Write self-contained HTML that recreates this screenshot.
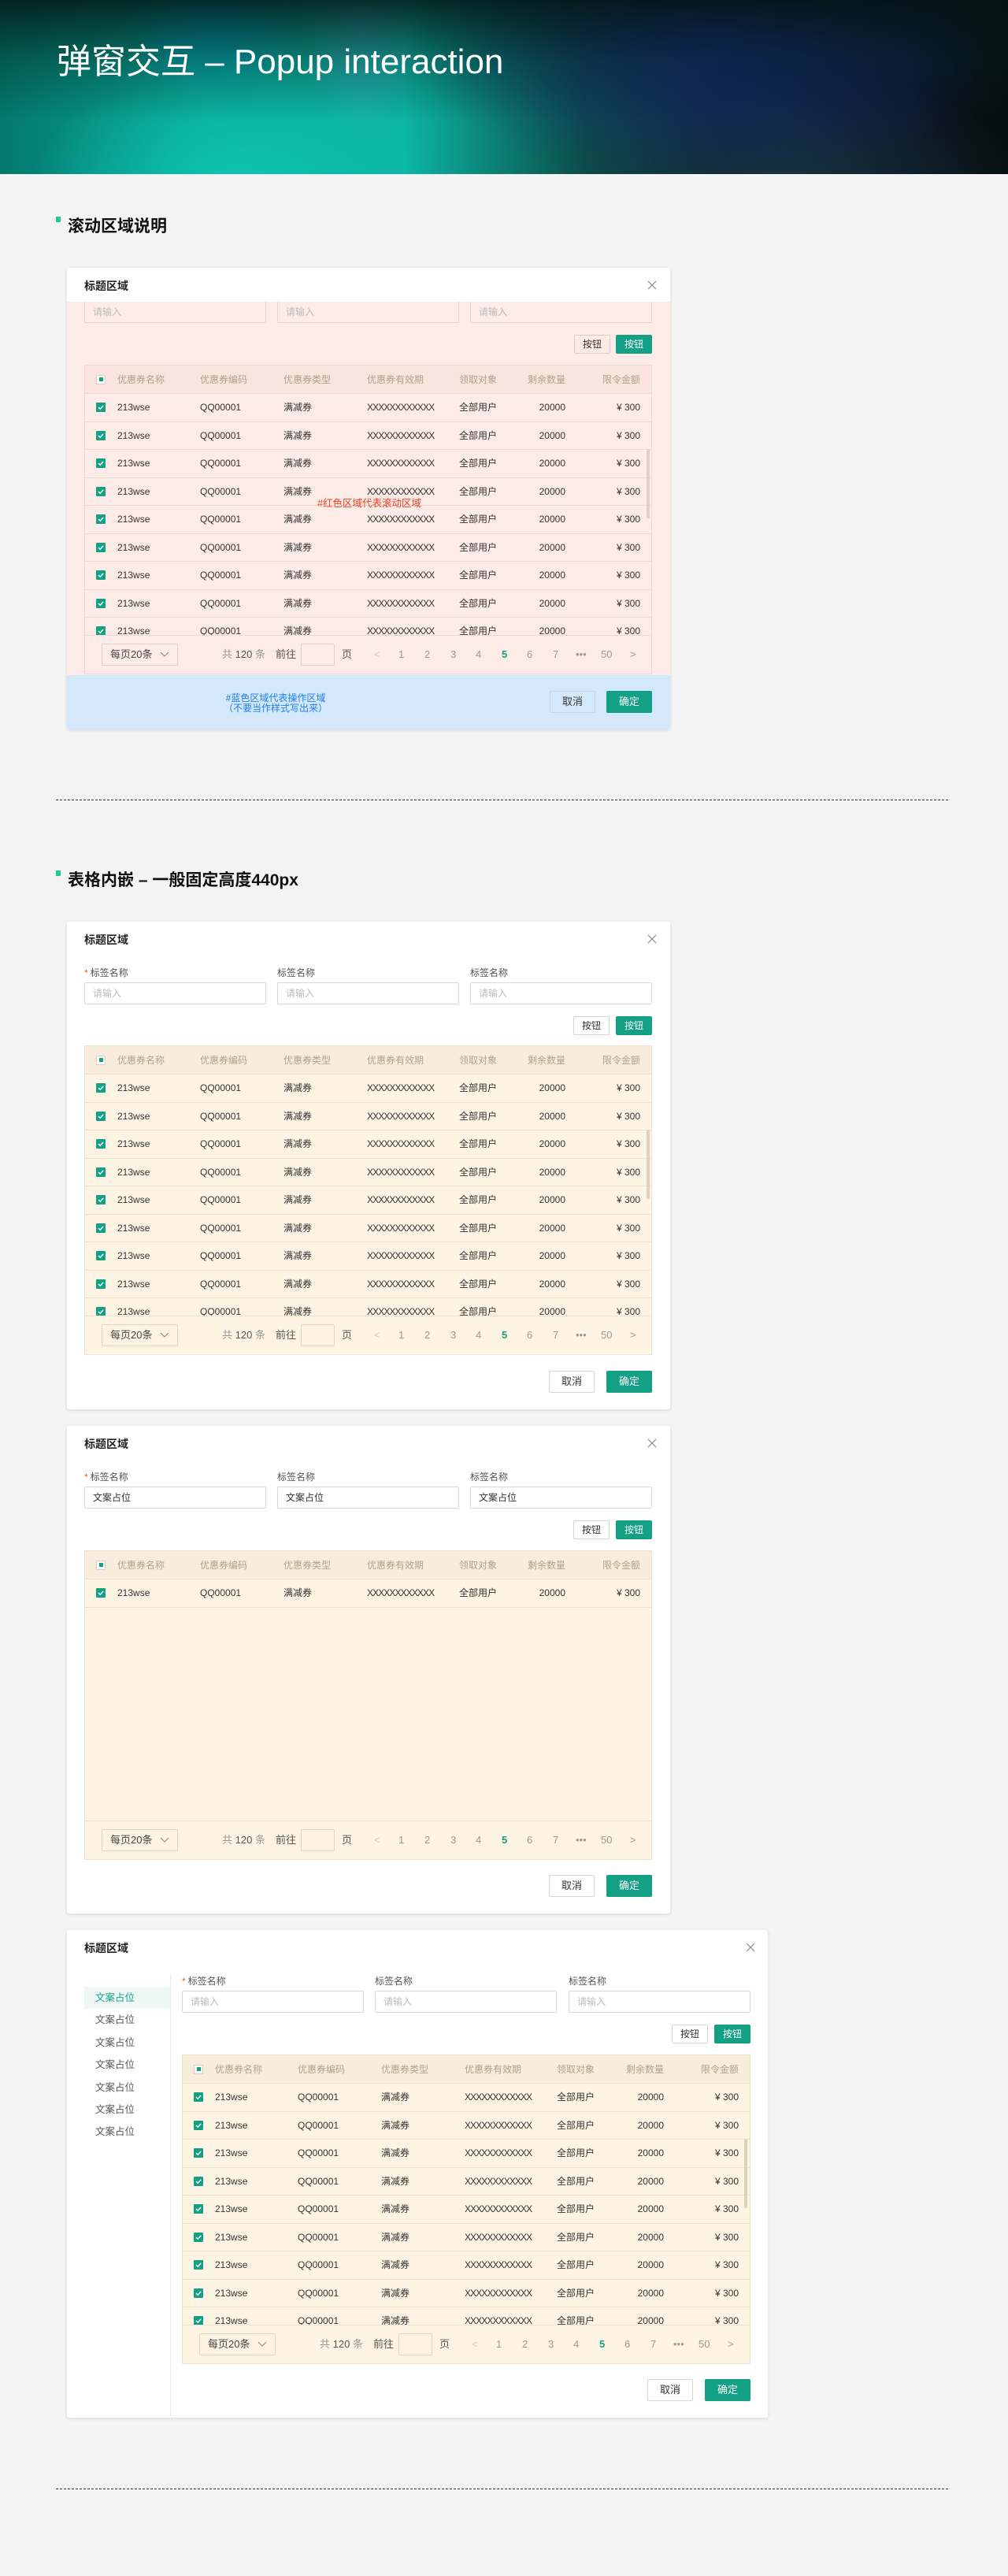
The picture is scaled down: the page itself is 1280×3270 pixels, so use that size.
<!DOCTYPE html>
<html><head><meta charset="utf-8">
<style>
*{margin:0;padding:0;box-sizing:border-box}
body{width:1280px;height:3270px;background:#f4f4f4;font-family:"Liberation Sans","Noto Sans CJK SC",sans-serif;position:relative;overflow:hidden;color:#333}
.banner{position:absolute;left:0;top:0;width:1280px;height:221px;overflow:hidden;
background:
radial-gradient(ellipse 260px 160px at 300px 240px,rgba(12,200,180,.9),rgba(12,200,180,0) 100%),
radial-gradient(ellipse 120px 110px at 270px 20px,rgba(0,170,210,.8),rgba(0,170,210,0)),
radial-gradient(ellipse 80px 150px at 460px 30px,rgba(60,180,200,.7),rgba(60,180,200,0)),
radial-gradient(ellipse 380px 200px at 900px 40px,rgba(20,45,120,.95),rgba(20,45,120,0)),
radial-gradient(ellipse 300px 140px at 1000px 230px,rgba(30,70,70,.6),rgba(30,70,70,0)),
linear-gradient(90deg,#03796e 0%,#0aa99a 20%,#0cb5a5 40%,#0b4e48 58%,#0a1a2a 72%,#0a1225 90%,#050f0c 100%);}
.banner .shade{position:absolute;left:0;top:0;width:100%;height:100%;background:linear-gradient(180deg,rgba(3,20,18,.85) 0%,rgba(3,30,28,.35) 35%,rgba(0,0,0,0) 70%)}
.banner h1{position:absolute;left:72px;top:53px;font-size:44px;font-weight:normal;color:#fff;white-space:nowrap;line-height:52px}
.sec{position:absolute;left:86px;font-size:21px;font-weight:bold;color:#111;line-height:26px}
.sec:before{content:"";position:absolute;left:-15px;top:0px;width:6px;height:7px;background:#1ccf8f}
.dash{position:absolute;left:71px;width:1133px;height:0;border-top:1px dashed #333}
.dlg{position:absolute;background:#fff;border-radius:3px;box-shadow:0 1px 5px rgba(0,0,0,.12);overflow:hidden}
.ttl{position:absolute;left:22px;top:14px;font-size:14px;font-weight:bold;color:#222;line-height:18px}
.x{position:absolute;width:14px;height:14px}
.lbl{position:absolute;font-size:12px;color:#555;line-height:14px}
.lbl b{color:#f25a2a;font-weight:normal;margin-right:3px}
.inp{position:absolute;width:231px;height:28px;border:1px solid #d9d9d9;border-radius:2px;background:#fff;font-size:12px;color:#bbb;line-height:26px;padding-left:10px}
.inp.f{color:#333}
.btn{position:absolute;height:24px;width:46px;font-size:12px;line-height:22px;text-align:center;border:1px solid #d6d6d6;border-radius:2px;background:#fff;color:#333}
.btn.p{background:#14a085;border-color:#14a085;color:#fff}
.btn.l{width:58px;height:28px;line-height:26px;font-size:13px}
.tbl{position:absolute;width:721px;background:#fdf4e4;border:1px solid #f0e4cc;font-size:12px}
.th{position:relative;height:36px;background:#f8eddc;border-bottom:1px solid #efe2cb;color:#b0a28a}
.rows{position:relative;height:306px;overflow:hidden}
.r{position:relative;height:35.5px;border-bottom:1px solid #efe2cb}
.r span,.th span{position:absolute;top:50%;transform:translateY(-50%);white-space:nowrap;line-height:14px}
.c1{left:41px}.c2{left:146px}.c3{left:252px}.c4{left:358px}.c5{left:475px}.c6{right:109px}.c7{right:14px}
.r .c4{letter-spacing:-0.9px}
.cb{position:absolute;left:14px;top:50%;margin-top:-6px;width:12px;height:12px;background:#14a085;border-radius:1px}
.cb svg{position:absolute;left:1px;top:1px}
.cbh{position:absolute;left:14px;top:50%;margin-top:-6px;width:12px;height:12px;background:#fff;border:1px solid #d6cfc2;border-radius:1px}
.cbh:after{content:"";position:absolute;left:2.5px;top:2.5px;width:5px;height:5px;background:#14a085}
.sb{position:absolute;left:713px;top:70px;width:4px;height:88px;border-radius:2px;background:#dcd2bf}
.pg{position:relative;height:49px;border-top:1px solid #efe2cb;font-size:13px;color:#555}
.pg span{position:absolute;top:50%;transform:translateY(-50%);line-height:16px;white-space:nowrap}
.sel{position:absolute;left:21px;top:10px;width:97px;height:28px;border:1px solid #e0d6c3;border-radius:2px;line-height:26px;padding-left:10px;font-size:13px;color:#444}
.sel svg{position:absolute;right:10px;top:9px}
.gi{position:absolute;left:274px;top:10px;width:43px;height:28px;border:1px solid #e0d6c3;border-radius:2px;background:#fdf4e4}
.g{color:#999}
.pn{color:#999}
.pn.a{color:#14a085;font-weight:bold}
.side{position:absolute;left:22px;top:57px;width:110px;height:560px;border-right:1px solid #e8e8e8}
.mi{height:28.4px;line-height:28.4px;padding-left:14px;font-size:12.5px;color:#555}
.mi.a{background:#eef9f6;color:#14a085}
</style></head><body>

<div class="banner"><div class="shade"></div><h1>弹窗交互 – Popup interaction</h1></div>

<div class="sec" style="top:275px">滚动区域说明</div>

<!-- Dialog 1 -->
<div class="dlg" style="left:85px;top:340px;width:766px;height:586px">
  <div style="position:absolute;left:0;top:43px;width:766px;height:474px;background:#fdebe7"></div>
  <div style="position:absolute;left:0;top:517px;width:766px;height:69px;background:#d4e8fb"></div>
  <div class="inp" style="left:22px;top:42px;background:#fdebe7;border-color:#e6d2ce">请输入</div>
  <div class="inp" style="left:267px;top:42px;background:#fdebe7;border-color:#e6d2ce">请输入</div>
  <div class="inp" style="left:512px;top:42px;background:#fdebe7;border-color:#e6d2ce">请输入</div>
  <div style="position:absolute;left:0;top:0;width:766px;height:43px;background:#fff"></div>
  <div class="ttl">标题区域</div>
  <svg class="x" style="left:736px;top:15px" viewBox="0 0 14 14"><path d="M2 2L12 12M12 2L2 12" stroke="#888" stroke-width="1.2"/></svg>
  <div class="btn" style="left:644px;top:85px;background:#fdebe7;border-color:#e0cbc7">按钮</div>
  <div class="btn p" style="left:697px;top:85px">按钮</div>
  <div class="tbl" style="left:22px;top:123px;background:#fdebe7;border-color:#f0d8d3">
    <div class="th" style="background:#fbe3de;border-color:#f0d8d3"><div class="cbh"></div><span class="c1">优惠券名称</span><span class="c2">优惠券编码</span><span class="c3">优惠券类型</span><span class="c4">优惠券有效期</span><span class="c5">领取对象</span><span class="c6">剩余数量</span><span class="c7">限令金额</span></div>
    <div class="rows">
      <div class="r" style="border-color:#f0d8d3"><div class="cb"><svg width="10" height="10" viewBox="0 0 10 10"><path d="M2 5L4.2 7.2L8.2 2.8" fill="none" stroke="#fff" stroke-width="1.4"/></svg></div><span class="c1">213wse</span><span class="c2">QQ00001</span><span class="c3">满减券</span><span class="c4">XXXXXXXXXXXX</span><span class="c5">全部用户</span><span class="c6">20000</span><span class="c7">¥ 300</span></div>
      <div class="r" style="border-color:#f0d8d3"><div class="cb"><svg width="10" height="10" viewBox="0 0 10 10"><path d="M2 5L4.2 7.2L8.2 2.8" fill="none" stroke="#fff" stroke-width="1.4"/></svg></div><span class="c1">213wse</span><span class="c2">QQ00001</span><span class="c3">满减券</span><span class="c4">XXXXXXXXXXXX</span><span class="c5">全部用户</span><span class="c6">20000</span><span class="c7">¥ 300</span></div>
      <div class="r" style="border-color:#f0d8d3"><div class="cb"><svg width="10" height="10" viewBox="0 0 10 10"><path d="M2 5L4.2 7.2L8.2 2.8" fill="none" stroke="#fff" stroke-width="1.4"/></svg></div><span class="c1">213wse</span><span class="c2">QQ00001</span><span class="c3">满减券</span><span class="c4">XXXXXXXXXXXX</span><span class="c5">全部用户</span><span class="c6">20000</span><span class="c7">¥ 300</span></div>
      <div class="r" style="border-color:#f0d8d3"><div class="cb"><svg width="10" height="10" viewBox="0 0 10 10"><path d="M2 5L4.2 7.2L8.2 2.8" fill="none" stroke="#fff" stroke-width="1.4"/></svg></div><span class="c1">213wse</span><span class="c2">QQ00001</span><span class="c3">满减券</span><span class="c4">XXXXXXXXXXXX</span><span class="c5">全部用户</span><span class="c6">20000</span><span class="c7">¥ 300</span></div>
      <div class="r" style="border-color:#f0d8d3"><div class="cb"><svg width="10" height="10" viewBox="0 0 10 10"><path d="M2 5L4.2 7.2L8.2 2.8" fill="none" stroke="#fff" stroke-width="1.4"/></svg></div><span class="c1">213wse</span><span class="c2">QQ00001</span><span class="c3">满减券</span><span class="c4">XXXXXXXXXXXX</span><span class="c5">全部用户</span><span class="c6">20000</span><span class="c7">¥ 300</span></div>
      <div class="r" style="border-color:#f0d8d3"><div class="cb"><svg width="10" height="10" viewBox="0 0 10 10"><path d="M2 5L4.2 7.2L8.2 2.8" fill="none" stroke="#fff" stroke-width="1.4"/></svg></div><span class="c1">213wse</span><span class="c2">QQ00001</span><span class="c3">满减券</span><span class="c4">XXXXXXXXXXXX</span><span class="c5">全部用户</span><span class="c6">20000</span><span class="c7">¥ 300</span></div>
      <div class="r" style="border-color:#f0d8d3"><div class="cb"><svg width="10" height="10" viewBox="0 0 10 10"><path d="M2 5L4.2 7.2L8.2 2.8" fill="none" stroke="#fff" stroke-width="1.4"/></svg></div><span class="c1">213wse</span><span class="c2">QQ00001</span><span class="c3">满减券</span><span class="c4">XXXXXXXXXXXX</span><span class="c5">全部用户</span><span class="c6">20000</span><span class="c7">¥ 300</span></div>
      <div class="r" style="border-color:#f0d8d3"><div class="cb"><svg width="10" height="10" viewBox="0 0 10 10"><path d="M2 5L4.2 7.2L8.2 2.8" fill="none" stroke="#fff" stroke-width="1.4"/></svg></div><span class="c1">213wse</span><span class="c2">QQ00001</span><span class="c3">满减券</span><span class="c4">XXXXXXXXXXXX</span><span class="c5">全部用户</span><span class="c6">20000</span><span class="c7">¥ 300</span></div>
      <div class="r" style="border-color:#f0d8d3"><div class="cb"><svg width="10" height="10" viewBox="0 0 10 10"><path d="M2 5L4.2 7.2L8.2 2.8" fill="none" stroke="#fff" stroke-width="1.4"/></svg></div><span class="c1">213wse</span><span class="c2">QQ00001</span><span class="c3">满减券</span><span class="c4">XXXXXXXXXXXX</span><span class="c5">全部用户</span><span class="c6">20000</span><span class="c7">¥ 300</span></div>
      <div class="sb" style="background:#e2cfcb"></div>
      <div style="position:absolute;left:295px;top:132px;font-size:12.5px;color:#f0401f;line-height:14px;white-space:nowrap">#红色区域代表滚动区域</div>
    </div>
    <div class="pg" style="border-color:#f0d8d3">
      <div class="sel" style="border-color:#e3cfca">每页20条<svg width="12" height="8" viewBox="0 0 12 8"><path d="M1 1L6 6L11 1" fill="none" stroke="#888" stroke-width="1.1"/></svg></div>
      <span style="left:174px"><i class="g" style="font-style:normal">共</i> 120 <i class="g" style="font-style:normal">条</i></span>
      <span style="left:242px">前往</span>
      <div class="gi" style="background:#fdebe7;border-color:#e3cfca"></div>
      <span style="left:326px">页</span>
      <span class="pn" style="left:367px;color:#ccc">&lt;</span><span class="pn" style="left:398px">1</span><span class="pn" style="left:431px">2</span><span class="pn" style="left:464px">3</span><span class="pn" style="left:496px">4</span><span class="pn a" style="left:529px">5</span><span class="pn" style="left:561px">6</span><span class="pn" style="left:594px">7</span><span class="pn" style="left:623px">•••</span><span class="pn" style="left:655px">50</span><span class="pn" style="left:692px">&gt;</span>
    </div>
  </div>
  <div style="position:absolute;left:180px;top:540px;width:170px;text-align:center;font-size:12px;line-height:13px;color:#1f80e8">#蓝色区域代表操作区域<br>（不要当作样式写出来）</div>
  <div class="btn l" style="left:613px;top:537px;background:#d4e8fb;border-color:#c6d6e4">取消</div>
  <div class="btn l p" style="left:685px;top:537px">确定</div>
</div>

<div class="dash" style="top:1015px"></div>
<div class="sec" style="top:1105px">表格内嵌 – 一般固定高度440px</div>

<!-- Dialog 2 -->
<div class="dlg" style="left:85px;top:1170px;width:766px;height:619px">
  <div class="ttl">标题区域</div>
  <svg class="x" style="left:736px;top:15px" viewBox="0 0 14 14"><path d="M2 2L12 12M12 2L2 12" stroke="#888" stroke-width="1.2"/></svg>
  <div class="lbl" style="left:22px;top:58px"><b>*</b>标签名称</div>
  <div class="lbl" style="left:267px;top:58px">标签名称</div>
  <div class="lbl" style="left:512px;top:58px">标签名称</div>
  <div class="inp" style="left:22px;top:77px">请输入</div>
  <div class="inp" style="left:267px;top:77px">请输入</div>
  <div class="inp" style="left:512px;top:77px">请输入</div>
  <div class="btn" style="left:643px;top:120px">按钮</div>
  <div class="btn p" style="left:697px;top:120px">按钮</div>
  <div class="tbl" style="left:22px;top:157px">
    <div class="th"><div class="cbh"></div><span class="c1">优惠券名称</span><span class="c2">优惠券编码</span><span class="c3">优惠券类型</span><span class="c4">优惠券有效期</span><span class="c5">领取对象</span><span class="c6">剩余数量</span><span class="c7">限令金额</span></div>
    <div class="rows">
      <div class="r"><div class="cb"><svg width="10" height="10" viewBox="0 0 10 10"><path d="M2 5L4.2 7.2L8.2 2.8" fill="none" stroke="#fff" stroke-width="1.4"/></svg></div><span class="c1">213wse</span><span class="c2">QQ00001</span><span class="c3">满减券</span><span class="c4">XXXXXXXXXXXX</span><span class="c5">全部用户</span><span class="c6">20000</span><span class="c7">¥ 300</span></div>
      <div class="r"><div class="cb"><svg width="10" height="10" viewBox="0 0 10 10"><path d="M2 5L4.2 7.2L8.2 2.8" fill="none" stroke="#fff" stroke-width="1.4"/></svg></div><span class="c1">213wse</span><span class="c2">QQ00001</span><span class="c3">满减券</span><span class="c4">XXXXXXXXXXXX</span><span class="c5">全部用户</span><span class="c6">20000</span><span class="c7">¥ 300</span></div>
      <div class="r"><div class="cb"><svg width="10" height="10" viewBox="0 0 10 10"><path d="M2 5L4.2 7.2L8.2 2.8" fill="none" stroke="#fff" stroke-width="1.4"/></svg></div><span class="c1">213wse</span><span class="c2">QQ00001</span><span class="c3">满减券</span><span class="c4">XXXXXXXXXXXX</span><span class="c5">全部用户</span><span class="c6">20000</span><span class="c7">¥ 300</span></div>
      <div class="r"><div class="cb"><svg width="10" height="10" viewBox="0 0 10 10"><path d="M2 5L4.2 7.2L8.2 2.8" fill="none" stroke="#fff" stroke-width="1.4"/></svg></div><span class="c1">213wse</span><span class="c2">QQ00001</span><span class="c3">满减券</span><span class="c4">XXXXXXXXXXXX</span><span class="c5">全部用户</span><span class="c6">20000</span><span class="c7">¥ 300</span></div>
      <div class="r"><div class="cb"><svg width="10" height="10" viewBox="0 0 10 10"><path d="M2 5L4.2 7.2L8.2 2.8" fill="none" stroke="#fff" stroke-width="1.4"/></svg></div><span class="c1">213wse</span><span class="c2">QQ00001</span><span class="c3">满减券</span><span class="c4">XXXXXXXXXXXX</span><span class="c5">全部用户</span><span class="c6">20000</span><span class="c7">¥ 300</span></div>
      <div class="r"><div class="cb"><svg width="10" height="10" viewBox="0 0 10 10"><path d="M2 5L4.2 7.2L8.2 2.8" fill="none" stroke="#fff" stroke-width="1.4"/></svg></div><span class="c1">213wse</span><span class="c2">QQ00001</span><span class="c3">满减券</span><span class="c4">XXXXXXXXXXXX</span><span class="c5">全部用户</span><span class="c6">20000</span><span class="c7">¥ 300</span></div>
      <div class="r"><div class="cb"><svg width="10" height="10" viewBox="0 0 10 10"><path d="M2 5L4.2 7.2L8.2 2.8" fill="none" stroke="#fff" stroke-width="1.4"/></svg></div><span class="c1">213wse</span><span class="c2">QQ00001</span><span class="c3">满减券</span><span class="c4">XXXXXXXXXXXX</span><span class="c5">全部用户</span><span class="c6">20000</span><span class="c7">¥ 300</span></div>
      <div class="r"><div class="cb"><svg width="10" height="10" viewBox="0 0 10 10"><path d="M2 5L4.2 7.2L8.2 2.8" fill="none" stroke="#fff" stroke-width="1.4"/></svg></div><span class="c1">213wse</span><span class="c2">QQ00001</span><span class="c3">满减券</span><span class="c4">XXXXXXXXXXXX</span><span class="c5">全部用户</span><span class="c6">20000</span><span class="c7">¥ 300</span></div>
      <div class="r"><div class="cb"><svg width="10" height="10" viewBox="0 0 10 10"><path d="M2 5L4.2 7.2L8.2 2.8" fill="none" stroke="#fff" stroke-width="1.4"/></svg></div><span class="c1">213wse</span><span class="c2">QQ00001</span><span class="c3">满减券</span><span class="c4">XXXXXXXXXXXX</span><span class="c5">全部用户</span><span class="c6">20000</span><span class="c7">¥ 300</span></div>
      <div class="sb"></div>
    </div>
    <div class="pg">
      <div class="sel">每页20条<svg width="12" height="8" viewBox="0 0 12 8"><path d="M1 1L6 6L11 1" fill="none" stroke="#888" stroke-width="1.1"/></svg></div>
      <span style="left:174px"><i class="g" style="font-style:normal">共</i> 120 <i class="g" style="font-style:normal">条</i></span>
      <span style="left:242px">前往</span>
      <div class="gi"></div>
      <span style="left:326px">页</span>
      <span class="pn" style="left:367px;color:#ccc">&lt;</span><span class="pn" style="left:398px">1</span><span class="pn" style="left:431px">2</span><span class="pn" style="left:464px">3</span><span class="pn" style="left:496px">4</span><span class="pn a" style="left:529px">5</span><span class="pn" style="left:561px">6</span><span class="pn" style="left:594px">7</span><span class="pn" style="left:623px">•••</span><span class="pn" style="left:655px">50</span><span class="pn" style="left:692px">&gt;</span>
    </div>
  </div>
  <div class="btn l" style="left:612px;top:570px">取消</div>
  <div class="btn l p" style="left:685px;top:570px">确定</div>
</div>

<!-- Dialog 3 -->
<div class="dlg" style="left:85px;top:1810px;width:766px;height:619px">
  <div class="ttl">标题区域</div>
  <svg class="x" style="left:736px;top:15px" viewBox="0 0 14 14"><path d="M2 2L12 12M12 2L2 12" stroke="#888" stroke-width="1.2"/></svg>
  <div class="lbl" style="left:22px;top:58px"><b>*</b>标签名称</div>
  <div class="lbl" style="left:267px;top:58px">标签名称</div>
  <div class="lbl" style="left:512px;top:58px">标签名称</div>
  <div class="inp f" style="left:22px;top:77px">文案占位</div>
  <div class="inp f" style="left:267px;top:77px">文案占位</div>
  <div class="inp f" style="left:512px;top:77px">文案占位</div>
  <div class="btn" style="left:643px;top:120px">按钮</div>
  <div class="btn p" style="left:697px;top:120px">按钮</div>
  <div class="tbl" style="left:22px;top:158px">
    <div class="th"><div class="cbh"></div><span class="c1">优惠券名称</span><span class="c2">优惠券编码</span><span class="c3">优惠券类型</span><span class="c4">优惠券有效期</span><span class="c5">领取对象</span><span class="c6">剩余数量</span><span class="c7">限令金额</span></div>
    <div class="rows">
      <div class="r"><div class="cb"><svg width="10" height="10" viewBox="0 0 10 10"><path d="M2 5L4.2 7.2L8.2 2.8" fill="none" stroke="#fff" stroke-width="1.4"/></svg></div><span class="c1">213wse</span><span class="c2">QQ00001</span><span class="c3">满减券</span><span class="c4">XXXXXXXXXXXX</span><span class="c5">全部用户</span><span class="c6">20000</span><span class="c7">¥ 300</span></div>
    </div>
    <div class="pg">
      <div class="sel">每页20条<svg width="12" height="8" viewBox="0 0 12 8"><path d="M1 1L6 6L11 1" fill="none" stroke="#888" stroke-width="1.1"/></svg></div>
      <span style="left:174px"><i class="g" style="font-style:normal">共</i> 120 <i class="g" style="font-style:normal">条</i></span>
      <span style="left:242px">前往</span>
      <div class="gi"></div>
      <span style="left:326px">页</span>
      <span class="pn" style="left:367px;color:#ccc">&lt;</span><span class="pn" style="left:398px">1</span><span class="pn" style="left:431px">2</span><span class="pn" style="left:464px">3</span><span class="pn" style="left:496px">4</span><span class="pn a" style="left:529px">5</span><span class="pn" style="left:561px">6</span><span class="pn" style="left:594px">7</span><span class="pn" style="left:623px">•••</span><span class="pn" style="left:655px">50</span><span class="pn" style="left:692px">&gt;</span>
    </div>
  </div>
  <div class="btn l" style="left:612px;top:570px">取消</div>
  <div class="btn l p" style="left:685px;top:570px">确定</div>
</div>

<!-- Dialog 4 -->
<div class="dlg" style="left:85px;top:2450px;width:890px;height:619px">
  <div class="ttl">标题区域</div>
  <svg class="x" style="left:861px;top:15px" viewBox="0 0 14 14"><path d="M2 2L12 12M12 2L2 12" stroke="#888" stroke-width="1.2"/></svg>
  <div class="side"><div style="height:15px"></div>
    <div class="mi a">文案占位</div><div class="mi">文案占位</div><div class="mi">文案占位</div><div class="mi">文案占位</div><div class="mi">文案占位</div><div class="mi">文案占位</div><div class="mi">文案占位</div>
  </div>
  <div class="lbl" style="left:146px;top:58px"><b>*</b>标签名称</div>
  <div class="lbl" style="left:391px;top:58px">标签名称</div>
  <div class="lbl" style="left:637px;top:58px">标签名称</div>
  <div class="inp" style="left:146px;top:77px">请输入</div>
  <div class="inp" style="left:391px;top:77px">请输入</div>
  <div class="inp" style="left:637px;top:77px">请输入</div>
  <div class="btn" style="left:768px;top:120px">按钮</div>
  <div class="btn p" style="left:822px;top:120px">按钮</div>
  <div class="tbl" style="left:146px;top:158px;width:722px">
    <div class="th"><div class="cbh"></div><span class="c1">优惠券名称</span><span class="c2">优惠券编码</span><span class="c3">优惠券类型</span><span class="c4">优惠券有效期</span><span class="c5">领取对象</span><span class="c6">剩余数量</span><span class="c7">限令金额</span></div>
    <div class="rows">
      <div class="r"><div class="cb"><svg width="10" height="10" viewBox="0 0 10 10"><path d="M2 5L4.2 7.2L8.2 2.8" fill="none" stroke="#fff" stroke-width="1.4"/></svg></div><span class="c1">213wse</span><span class="c2">QQ00001</span><span class="c3">满减券</span><span class="c4">XXXXXXXXXXXX</span><span class="c5">全部用户</span><span class="c6">20000</span><span class="c7">¥ 300</span></div>
      <div class="r"><div class="cb"><svg width="10" height="10" viewBox="0 0 10 10"><path d="M2 5L4.2 7.2L8.2 2.8" fill="none" stroke="#fff" stroke-width="1.4"/></svg></div><span class="c1">213wse</span><span class="c2">QQ00001</span><span class="c3">满减券</span><span class="c4">XXXXXXXXXXXX</span><span class="c5">全部用户</span><span class="c6">20000</span><span class="c7">¥ 300</span></div>
      <div class="r"><div class="cb"><svg width="10" height="10" viewBox="0 0 10 10"><path d="M2 5L4.2 7.2L8.2 2.8" fill="none" stroke="#fff" stroke-width="1.4"/></svg></div><span class="c1">213wse</span><span class="c2">QQ00001</span><span class="c3">满减券</span><span class="c4">XXXXXXXXXXXX</span><span class="c5">全部用户</span><span class="c6">20000</span><span class="c7">¥ 300</span></div>
      <div class="r"><div class="cb"><svg width="10" height="10" viewBox="0 0 10 10"><path d="M2 5L4.2 7.2L8.2 2.8" fill="none" stroke="#fff" stroke-width="1.4"/></svg></div><span class="c1">213wse</span><span class="c2">QQ00001</span><span class="c3">满减券</span><span class="c4">XXXXXXXXXXXX</span><span class="c5">全部用户</span><span class="c6">20000</span><span class="c7">¥ 300</span></div>
      <div class="r"><div class="cb"><svg width="10" height="10" viewBox="0 0 10 10"><path d="M2 5L4.2 7.2L8.2 2.8" fill="none" stroke="#fff" stroke-width="1.4"/></svg></div><span class="c1">213wse</span><span class="c2">QQ00001</span><span class="c3">满减券</span><span class="c4">XXXXXXXXXXXX</span><span class="c5">全部用户</span><span class="c6">20000</span><span class="c7">¥ 300</span></div>
      <div class="r"><div class="cb"><svg width="10" height="10" viewBox="0 0 10 10"><path d="M2 5L4.2 7.2L8.2 2.8" fill="none" stroke="#fff" stroke-width="1.4"/></svg></div><span class="c1">213wse</span><span class="c2">QQ00001</span><span class="c3">满减券</span><span class="c4">XXXXXXXXXXXX</span><span class="c5">全部用户</span><span class="c6">20000</span><span class="c7">¥ 300</span></div>
      <div class="r"><div class="cb"><svg width="10" height="10" viewBox="0 0 10 10"><path d="M2 5L4.2 7.2L8.2 2.8" fill="none" stroke="#fff" stroke-width="1.4"/></svg></div><span class="c1">213wse</span><span class="c2">QQ00001</span><span class="c3">满减券</span><span class="c4">XXXXXXXXXXXX</span><span class="c5">全部用户</span><span class="c6">20000</span><span class="c7">¥ 300</span></div>
      <div class="r"><div class="cb"><svg width="10" height="10" viewBox="0 0 10 10"><path d="M2 5L4.2 7.2L8.2 2.8" fill="none" stroke="#fff" stroke-width="1.4"/></svg></div><span class="c1">213wse</span><span class="c2">QQ00001</span><span class="c3">满减券</span><span class="c4">XXXXXXXXXXXX</span><span class="c5">全部用户</span><span class="c6">20000</span><span class="c7">¥ 300</span></div>
      <div class="r"><div class="cb"><svg width="10" height="10" viewBox="0 0 10 10"><path d="M2 5L4.2 7.2L8.2 2.8" fill="none" stroke="#fff" stroke-width="1.4"/></svg></div><span class="c1">213wse</span><span class="c2">QQ00001</span><span class="c3">满减券</span><span class="c4">XXXXXXXXXXXX</span><span class="c5">全部用户</span><span class="c6">20000</span><span class="c7">¥ 300</span></div>
      <div class="sb"></div>
    </div>
    <div class="pg">
      <div class="sel">每页20条<svg width="12" height="8" viewBox="0 0 12 8"><path d="M1 1L6 6L11 1" fill="none" stroke="#888" stroke-width="1.1"/></svg></div>
      <span style="left:174px"><i class="g" style="font-style:normal">共</i> 120 <i class="g" style="font-style:normal">条</i></span>
      <span style="left:242px">前往</span>
      <div class="gi"></div>
      <span style="left:326px">页</span>
      <span class="pn" style="left:367px;color:#ccc">&lt;</span><span class="pn" style="left:398px">1</span><span class="pn" style="left:431px">2</span><span class="pn" style="left:464px">3</span><span class="pn" style="left:496px">4</span><span class="pn a" style="left:529px">5</span><span class="pn" style="left:561px">6</span><span class="pn" style="left:594px">7</span><span class="pn" style="left:623px">•••</span><span class="pn" style="left:655px">50</span><span class="pn" style="left:692px">&gt;</span>
    </div>
  </div>
  <div class="btn l" style="left:737px;top:570px">取消</div>
  <div class="btn l p" style="left:810px;top:570px">确定</div>
</div>

<div class="dash" style="top:3159px"></div>
</body></html>
